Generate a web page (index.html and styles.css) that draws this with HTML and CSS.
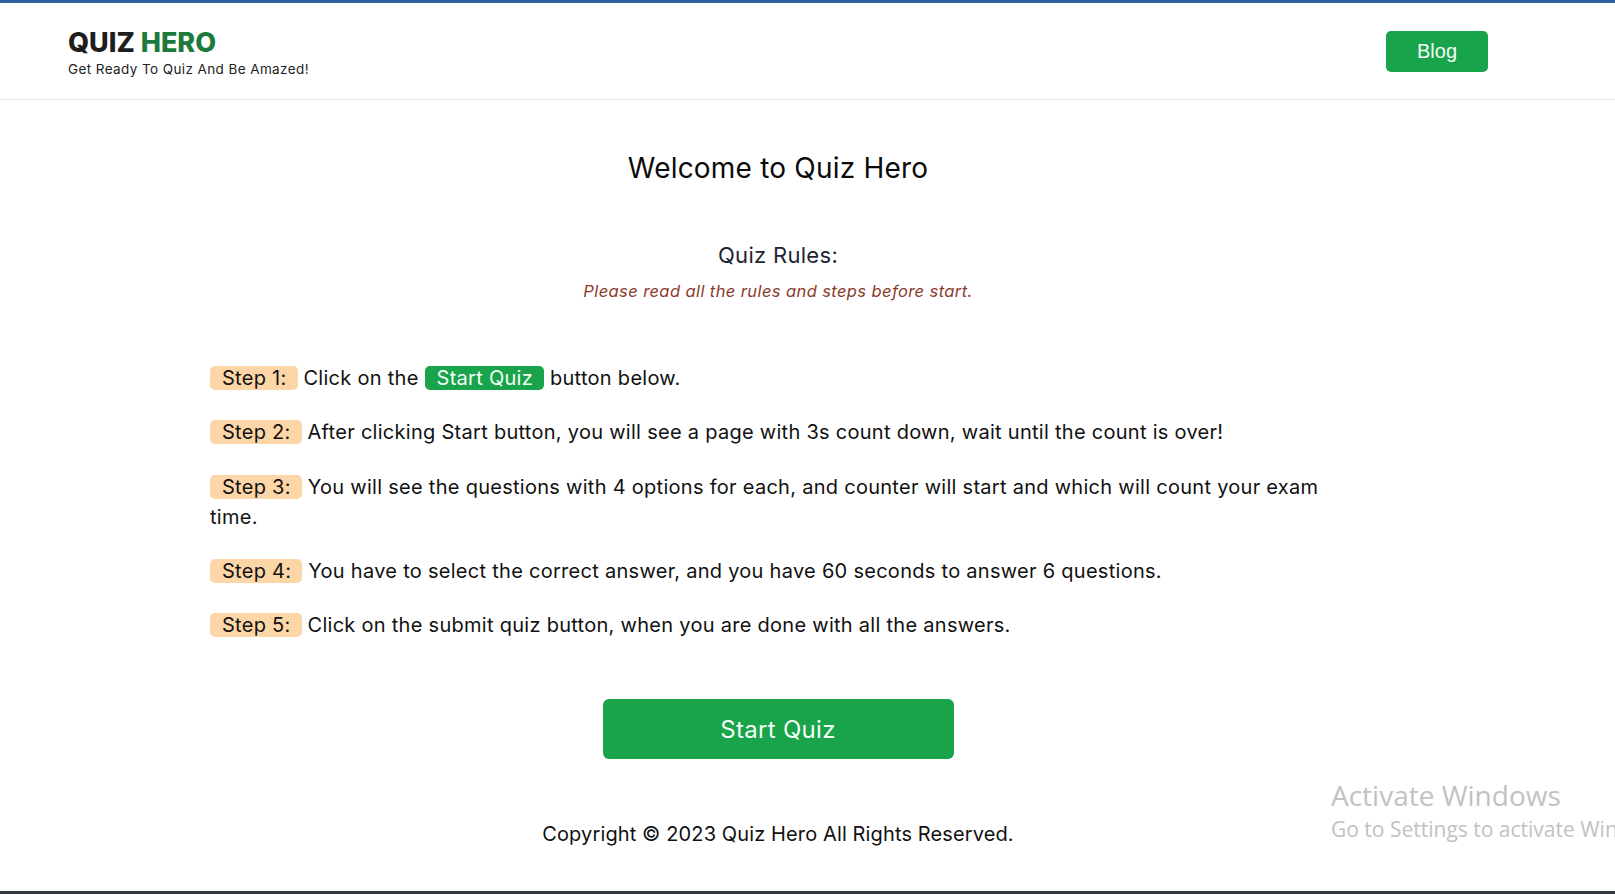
FILE: index.html
```html
<!DOCTYPE html>
<html lang="en">
<head>
<meta charset="utf-8">
<title>Quiz Hero</title>
<link rel="stylesheet" href="styles.css">
</head>
<body>
<header class="site-header">
  <div class="header-inner">
    <div class="brand">
      <h1 class="logo">QUIZ <span class="logo-accent">HERO</span></h1>
      <p class="tagline">Get Ready To Quiz And Be Amazed!</p>
    </div>
    <a class="blog-btn" href="#">Blog</a>
  </div>
</header>
<main class="main">
  <h2 class="welcome">Welcome to Quiz Hero</h2>
  <section class="rules">
    <h3 class="rules-title">Quiz Rules:</h3>
    <p class="rules-note">Please read all the rules and steps before start.</p>
  </section>
  <ul class="steps">
    <li><span class="badge">Step 1:</span> Click on the <span class="inline-btn">Start Quiz</span> button below.</li>
    <li><span class="badge">Step 2:</span> After clicking Start button, you will see a page with 3s count down, wait until the count is over!</li>
    <li><span class="badge">Step 3:</span> You will see the questions with 4 options for each, and counter will start and which will count your exam time.</li>
    <li><span class="badge">Step 4:</span> You have to select the correct answer, and you have 60 seconds to answer 6 questions.</li>
    <li><span class="badge">Step 5:</span> Click on the submit quiz button, when you are done with all the answers.</li>
  </ul>
  <div class="start-wrap">
    <button class="start-btn" type="button">Start Quiz</button>
  </div>
  <footer class="footer">Copyright © 2023 Quiz Hero All Rights Reserved.</footer>
</main>
<div class="watermark">
  <div class="wm-title">Activate Windows</div>
  <div class="wm-sub">Go to Settings to activate Windows.</div>
</div>
<div class="taskbar-edge"></div>
</body>
</html>
```
FILE: styles.css
```css
html, body {
  margin: 0;
  padding: 0;
  background: #ffffff;
  overflow: hidden;
}
body {
  font-family: Inter, "Noto Sans", Roboto, sans-serif;
  color: #111111;
  width: 1615px;
  height: 894px;
  position: relative;
}
.site-header {
  border-top: 3px solid #2d5f9e;
  border-bottom: 1px solid #ececec;
  height: 96px;
  box-sizing: content-box;
}
.header-inner {
  height: 100%;
  margin: 0 127px 0 68px;
  display: flex;
  align-items: center;
  justify-content: space-between;
}
.brand {
  display: flex;
  flex-direction: column;
  padding-top: 4px;
}
.logo {
  margin: 0;
  font-size: 27px;
  line-height: 30px;
  font-weight: 800;
  color: #1e1e1e;
  letter-spacing: 0;
}
.logo-accent {
  color: #1c7a3c;
}
.tagline {
  margin: 2px 0 0;
  font-size: 13.5px;
  line-height: 18px;
  letter-spacing: 0.4px;
  color: #222;
}
.blog-btn {
  display: flex;
  align-items: center;
  justify-content: center;
  width: 102px;
  height: 41px;
  background: #19a34a;
  color: #f1fff5;
  border-radius: 5px;
  text-decoration: none;
  font-family: "Liberation Sans", Arial, sans-serif;
  font-size: 20px;
  margin-top: 1px;
}
.main {
  width: 1556px;
  display: flex;
  flex-direction: column;
  align-items: center;
}
.welcome {
  margin: 51px 0 0;
  font-size: 28px;
  line-height: 34px;
  font-weight: 400;
  color: #0b0b0b;
  letter-spacing: 0.2px;
}
.rules {
  margin-top: 56px;
  text-align: center;
}
.rules-title {
  margin: 0;
  font-size: 22px;
  line-height: 28px;
  font-weight: 400;
  color: #1f2433;
  letter-spacing: 0.3px;
}
.rules-note {
  margin: 10px 0 0;
  font-size: 16.5px;
  line-height: 24px;
  font-style: italic;
  color: #8b3a2a;
  letter-spacing: 0.4px;
}
.steps {
  list-style: none;
  margin: 60px 0 0;
  padding: 0;
  width: 1136px;
}
.steps li {
  font-size: 20px;
  line-height: 30px;
  margin-bottom: 24.3px;
  color: #111;
  letter-spacing: 0.28px;
}
.steps li:last-child {
  margin-bottom: 0;
}
.badge {
  display: inline-block;
  background: #fdd6a8;
  border-radius: 5px;
  padding: 0 11px 0 12px;
  line-height: 24px;
}
.inline-btn {
  display: inline-block;
  background: #19a34a;
  color: #f3fff6;
  border-radius: 5px;
  padding: 0 11px 0 12px;
  line-height: 24px;
}
.start-wrap {
  margin-top: 59px;
}
.start-btn {
  width: 351px;
  height: 60px;
  border: none;
  border-radius: 6px;
  background: #19a34a;
  color: #f3fff6;
  font-family: Inter, "Noto Sans", sans-serif;
  font-size: 24px;
  letter-spacing: 0.3px;
  cursor: pointer;
}
.footer {
  margin-top: 60px;
  font-size: 20px;
  line-height: 30px;
  color: #111;
  letter-spacing: 0.12px;
}
.watermark {
  position: absolute;
  left: 1331px;
  top: 777px;
  color: #c2c2c2;
  font-family: "Open Sans", "Noto Sans", sans-serif;
  white-space: nowrap;
}
.wm-title {
  font-size: 28px;
  line-height: 36px;
}
.wm-sub {
  font-size: 21px;
  line-height: 28px;
  margin-top: 2px;
}
.taskbar-edge {
  position: absolute;
  left: 0;
  right: 0;
  bottom: 0;
  height: 3px;
  background: #36393d;
}
```
